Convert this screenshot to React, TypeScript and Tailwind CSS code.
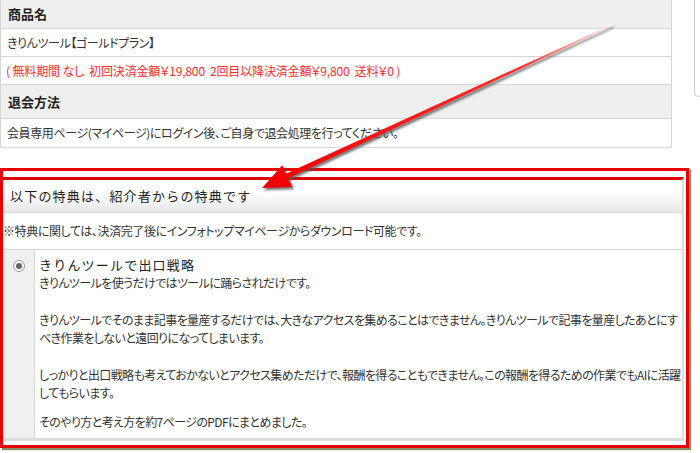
import React from 'react';

const jp = "font-['Noto_Sans_CJK_JP','Noto_Sans',sans-serif]";

function Arrow() {
  const pts =
    '611.7,24.4 285.9,173.7 282.3,165.3 262,188 292.5,187.1 288.1,178.3 612.3,25.6';
  return (
    <svg
      className="pointer-events-none absolute left-0 top-0"
      width="700"
      height="453"
      viewBox="0 0 700 453"
    >
      <defs>
        <linearGradient id="shaft" x1="612" y1="25" x2="262" y2="188" gradientUnits="userSpaceOnUse">
          <stop offset="0" stopColor="#fff2f2" />
          <stop offset="0.25" stopColor="#ff3030" />
          <stop offset="1" stopColor="#ee0000" />
        </linearGradient>
        <filter id="blur" x="-10%" y="-10%" width="120%" height="120%">
          <feGaussianBlur stdDeviation="0.9" />
        </filter>
      </defs>
      <polygon points={pts} transform="translate(1.8 2.2)" fill="#555" opacity="0.8" filter="url(#blur)" />
      <polygon points={pts} fill="url(#shaft)" />
    </svg>
  );
}

export default function App() {
  return (
    <div className={`relative h-[453px] w-[700px] overflow-hidden bg-white text-[#333] ${jp} [font-feature-settings:'palt']`}>
      <div className="flex">
        {/* product info table */}
        <div className="flex w-[672px] flex-col border-x border-[#d6d6d6] tracking-[-0.4px]">
          <div className="flex h-[29px] items-center border-b border-[#d6d6d6] bg-[#efefef] px-[7px] text-[13px] font-bold tracking-normal text-[#222]">
            商品名
          </div>
          <div className="flex h-[28px] items-center border-b border-[#d6d6d6] px-[6px] text-[12px]">
            きりんツール【ゴールドプラン】
          </div>
          <div className="flex h-[28px] items-center whitespace-pre border-b border-[#d6d6d6] px-[5px] text-[12px] tracking-[-0.15px] text-[#ff2a2a]">
            {'( 無料期間 なし  初回決済金額￥19,800  2回目以降決済金額￥9,800  送料￥0 )'}
          </div>
          <div className="flex h-[34px] items-center border-b border-[#d6d6d6] bg-[#efefef] px-[7px] text-[13px] font-bold tracking-normal text-[#222]">
            退会方法
          </div>
          <div className="flex h-[29px] items-center border-b border-[#d6d6d6] px-[6px] text-[12px]">
            会員専用ページ(マイページ)にログイン後、ご自身で退会処理を行ってください。
          </div>
        </div>
        <div className="ml-auto h-[97px] w-[6px] rounded-bl-[5px] border-b border-l border-[#d0d0d0]" />
      </div>

      {/* benefits box */}
      <div className="mt-[20px] h-[280px] w-[689px] border-[3px] border-[#e60000] pb-[4px] pr-[2px] pt-[6px] shadow-[2px_2px_1px_rgba(90,90,40,0.7)]">
        <div className="flex h-full flex-col border-b-[3px] border-r-[2px] border-t-[3px] border-b-[#dcdcdc] border-r-[#dcdcdc] border-t-[#e00000]">
          <div className="flex h-[33px] items-center border-b border-[#d8d8d8] bg-gradient-to-b from-white from-40% to-[#e6e6e6] pl-[7px] text-[13px] tracking-[1.2px] text-[#222] [font-feature-settings:normal]">
            以下の特典は、紹介者からの特典です
          </div>
          <div className="flex h-[37px] items-center border-b border-[#d6d6d6] text-[12px] tracking-[-0.4px]">
            ※特典に関しては、決済完了後にインフォトップマイページからダウンロード可能です。
          </div>
          <div className="flex flex-1">
            <div className="flex w-[32px] justify-center border-r border-[#d6d6d6] bg-[#f0f0f0] pt-[10px]">
              <span className="flex h-[12px] w-[12px] items-center justify-center rounded-full border border-[#9a9a9a] bg-white">
                <span className="h-[6px] w-[6px] rounded-full bg-[#666]" />
              </span>
            </div>
            <div className="flex-1 pl-[4px] pt-[6px] text-[12px] leading-[18px] tracking-[-0.6px]">
              <p className="text-[13px] tracking-[1.2px] text-[#222] [font-feature-settings:normal]">きりんツールで出口戦略</p>
              <p>きりんツールを使うだけではツールに踊らされだけです。</p>
              <p className="mt-[19px]">
                きりんツールでそのまま記事を量産するだけでは、大きなアクセスを集めることはできません。きりんツールで記事を量産したあとにすべき作業をしないと遠回りになってしまいます。
              </p>
              <p className="mt-[19px]">
                しっかりと出口戦略も考えておかないとアクセス集めただけで、報酬を得ることもできません。この報酬を得るための作業でもAIに活躍してもらいます。
              </p>
              <p className="mt-[11px]">そのやり方と考え方を約7ページのPDFにまとめました。</p>
            </div>
          </div>
        </div>
      </div>

      <Arrow />
    </div>
  );
}
